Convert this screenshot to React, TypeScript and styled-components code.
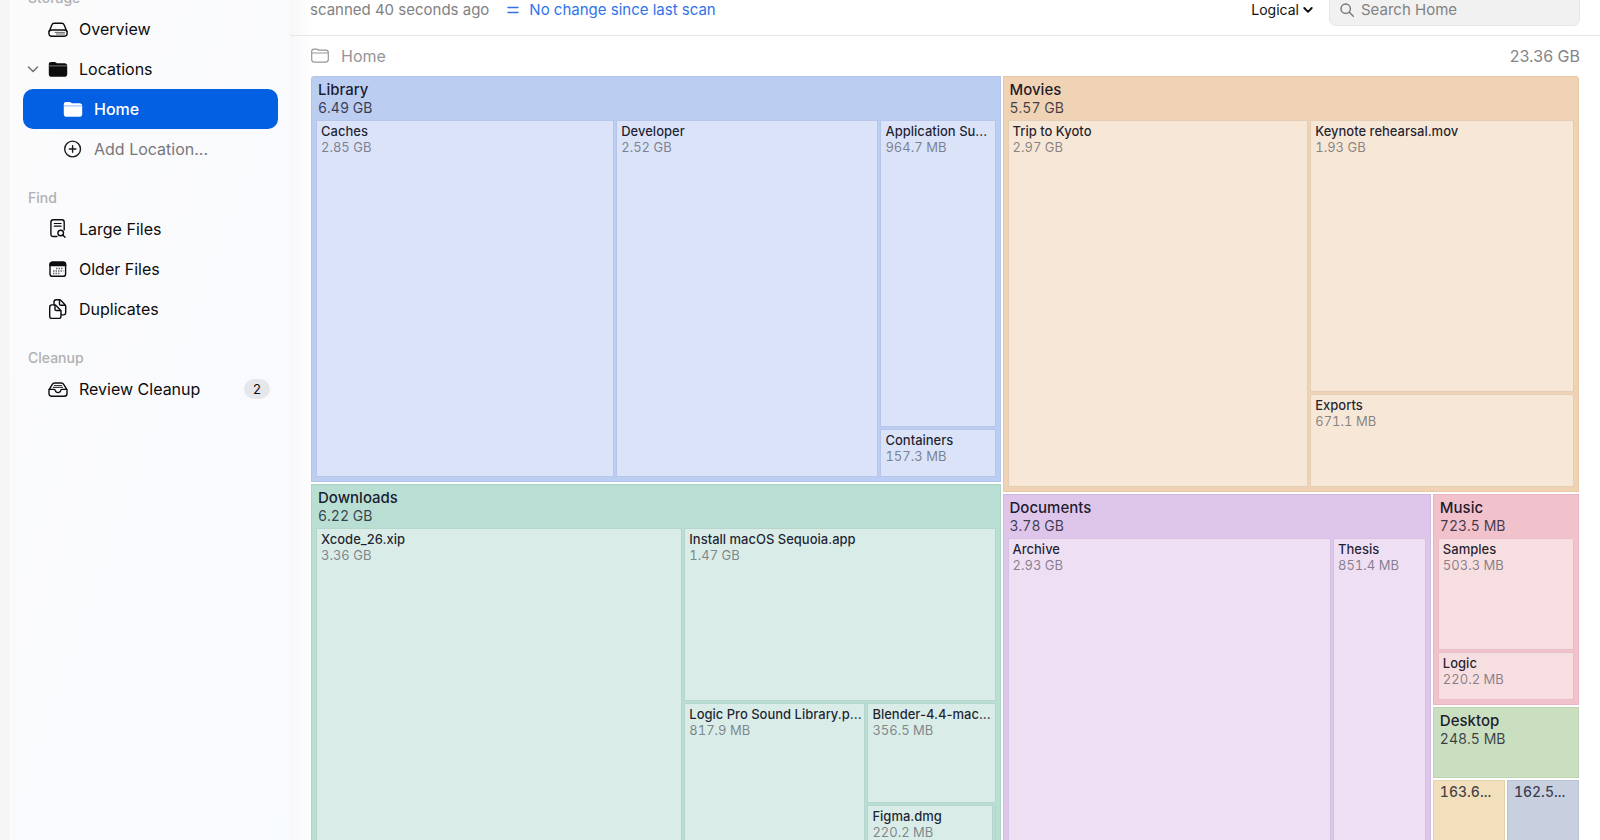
import React from "react";
import styled, { createGlobalStyle } from "styled-components";

const GlobalStyle = createGlobalStyle`
  *, *::before, *::after { box-sizing: border-box; }
  body {
    margin: 0;
    background: #fff;
    color: #111;
    font-family: Inter, "Liberation Sans", sans-serif;
    font-size: 16px;
    line-height: 20px;
  }
  button, input, select { font: inherit; color: inherit; }
`;

/* ---------- frame ---------- */

const Window = styled.div`
  display: flex;
  height: 100vh;
  padding-left: 10px;
  overflow: hidden;
  background: #f6f6f7;
`;

const Sidebar = styled.nav`
  flex: 0 0 280px;
  padding: 0 12px;
  background: linear-gradient(110deg, #fbfbfc 0%, #f9fafd 55%, #f8fbfe 100%);
  border-left: 1px solid #fdfdfd;
`;

const Section = styled.section`
  margin-bottom: 18px;

  &:first-child { margin-top: -13px; }
`;

const SectionTitle = styled.h2`
  margin: 0;
  padding-left: 5px;
  font-size: 14px;
  line-height: 22px;
  font-weight: 500;
  color: #b0b0b2;
`;

const Item = styled.a<{ $nested?: boolean; $active?: boolean; $muted?: boolean }>`
  position: relative;
  display: flex;
  align-items: center;
  gap: 11px;
  height: 40px;
  padding: 0 8px 0 ${(p) => (p.$nested ? 40 : 25)}px;
  border-radius: 10px;
  text-decoration: none;
  white-space: nowrap;
  font-weight: ${(p) => (p.$active ? 500 : 400)};
  color: ${(p) => (p.$active ? "#fff" : p.$muted ? "#77777a" : "#0c0c0d")};
  background: ${(p) => (p.$active ? "#0360e2" : "transparent")};

  svg { flex: none; }
`;

const Disclosure = styled.svg`
  position: absolute;
  left: 4px;
  color: #77777a;
`;

const Count = styled.span`
  margin-left: auto;
  width: 26px;
  border-radius: 10px;
  background: #e6e7ea;
  font-size: 13px;
  text-align: center;
`;

const PlusIcon = styled.svg`
  color: #19191a;
`;

const Main = styled.main`
  flex: 1;
  min-width: 0;
  background: linear-gradient(90deg, #f7f7f9 0, #fff 24px);
`;

const Toolbar = styled.header`
  display: flex;
  align-items: flex-start;
  height: 50px;
  margin-top: -14px;
  padding: 10px 20px 0;
  border-bottom: 1px solid #e5e5e6;
  font-size: 15px;
  line-height: 28px;
`;

const ScanAge = styled.span`
  color: #818183;
`;

const Delta = styled.button`
  display: flex;
  align-items: center;
  gap: 10px;
  height: 28px;
  margin-left: 18px;
  padding: 0;
  border: 0;
  background: none;
  color: #2f73ea;
`;

const ModeSelect = styled.label`
  display: flex;
  align-items: center;
  gap: 4px;
  height: 28px;
  margin-left: auto;
  font-size: 14px;

  select {
    appearance: none;
    field-sizing: content;
    padding: 0;
    border: 0;
    background: none;
  }
`;

const Search = styled.label`
  display: flex;
  align-items: center;
  gap: 7px;
  width: 251px;
  height: 30px;
  margin-left: 16px;
  padding: 0 10px 2px;
  border: 1px solid #e6e6e6;
  border-radius: 7px;
  background: #f1f1f1;
  color: #757577;

  input {
    flex: 1;
    min-width: 0;
    padding: 0;
    border: 0;
    outline: 0;
    background: none;
  }
  input::placeholder { color: #818183; opacity: 1; }
`;

const PathBar = styled.div`
  display: flex;
  align-items: center;
  gap: 11px;
  height: 40px;
  padding: 0 20px;
  color: #959597;

  span:last-child { margin-left: auto; color: #858587; }
`;

/* ---------- treemap ---------- */

const Treemap = styled.div`
  height: calc(100vh - 43px);
  margin: 0 21px;
  border-radius: 4px 4px 0 0;
  overflow: hidden;
  display: grid;
`;

const Split = styled.div<{ $rows?: number[]; $cols?: number[] }>`
  display: grid;
  gap: 2px;
  min-width: 0;
  min-height: 0;
  grid-template-rows: ${(p) => (p.$rows ?? [1]).map((n) => `minmax(0, ${n}fr)`).join(" ")};
  grid-template-columns: ${(p) => (p.$cols ?? [1]).map((n) => `minmax(0, ${n}fr)`).join(" ")};
`;

type Tone = { fill: string; edge: string; cell: string; line: string };

const tones: Record<string, Tone> = {
  blue: { fill: "#bbcdf0", edge: "#b1c4e9", cell: "#dae3f7", line: "#b6c5e9" },
  orange: { fill: "#f0d3b5", edge: "#e8c7a5", cell: "#f6e7d7", line: "#e5ceb6" },
  green: { fill: "#b9ded4", edge: "#abd4c8", cell: "#d9ece8", line: "#b5d5cd" },
  purple: { fill: "#dec6ea", edge: "#d1b8e0", cell: "#eedff3", line: "#d6c0e3" },
  pink: { fill: "#f1c2cb", edge: "#e7b4bf", cell: "#f6dee1", line: "#e9bfc8" },
  leaf: { fill: "#cadec0", edge: "#bdd4b1", cell: "#cadec0", line: "#bdd4b1" },
  sand: { fill: "#f1e0bb", edge: "#e5d2a9", cell: "#f1e0bb", line: "#e5d2a9" },
  slate: { fill: "#c8cfdf", edge: "#bac3d5", cell: "#c8cfdf", line: "#bac3d5" },
};

const Block = styled.section<{ $tone: Tone }>`
  display: grid;
  grid-template-rows: 44px minmax(0, 1fr);
  min-width: 0;
  min-height: 0;
  padding: 0 5px 5px;
  overflow: hidden;
  white-space: nowrap;
  font-variant-numeric: tabular-nums;
  background: ${(p) => p.$tone.fill};
  box-shadow: inset 0 0 0 1px ${(p) => p.$tone.edge};
`;

const BlockHead = styled.header<{ $compact: boolean }>`
  padding: ${(p) => (p.$compact ? 3 : 5)}px 2px 0;
  font-size: 14px;
  line-height: 18px;
  font-weight: ${(p) => (p.$compact ? 500 : 400)};
  color: rgba(10, 10, 30, 0.75);

  h3 {
    margin: 0;
    font-size: 15px;
    line-height: 18px;
    font-weight: 500;
    color: rgba(5, 5, 20, 0.9);
  }
`;

const CellBox = styled.article<{ $tone: Tone }>`
  min-width: 0;
  min-height: 0;
  padding: 2px 4px;
  overflow: hidden;
  border: 1px solid ${(p) => p.$tone.line};
  background: ${(p) => p.$tone.cell};
  font-size: 13px;
  line-height: 16px;
  color: rgba(30, 30, 50, 0.52);

  h4 {
    margin: 0;
    font-size: 13px;
    line-height: 16px;
    font-weight: 500;
    font-variant-numeric: normal;
    color: rgba(5, 5, 20, 0.88);
  }
`;

const Sliver = styled.div<{ $tone: Tone }>`
  background: ${(p) => p.$tone.line};
`;

function Folder({ tone, name, size, children }: { tone: Tone; name: string; size?: string; children?: React.ReactNode }) {
  return (
    <Block $tone={tone}>
      <BlockHead $compact={!size}>
        {size ? <h3>{name}</h3> : name}
        {size}
      </BlockHead>
      {children}
    </Block>
  );
}

function Cell({ tone, name, size }: { tone: Tone; name: string; size: string }) {
  return (
    <CellBox $tone={tone}>
      <h4>{name}</h4>
      {size}
    </CellBox>
  );
}

/* ---------- icons ---------- */

const stroke = {
  fill: "none",
  stroke: "currentColor",
  strokeWidth: 1.4,
  strokeLinecap: "round" as const,
  strokeLinejoin: "round" as const,
};

const DriveIcon = () => (
  <svg width="20" height="20" viewBox="0 0 20 20" {...stroke}>
    <path d="M1.2 12.400 3.700 6.200C4.200 4.900 5 4.300 6.300 4.300h7.400c1.300 0 2.100.6 2.600 1.900l2.500 6.200" />
    <rect x="0.900" y="11" width="18.200" height="6.200" rx="2.600" />
    <path d="M7 13.400h9.500M8.500 15h8" strokeWidth="0.900" opacity="0.700" />
  </svg>
);

const FolderFill = ({ line }: { line: string }) => (
  <svg width="20" height="20" viewBox="0 0 20 20" fill="currentColor">
    <path d="M.8 5.500C.8 3.700 1.500 3 3.200 3h3.100c.9 0 1.400.2 2 .8l.5.400h7.600c1.900 0 2.800.8 2.800 2.600v8.100c0 1.900-.9 2.800-2.800 2.800H3.600C1.700 17.700.8 16.800.8 14.900z" />
    <path d="M.8 6.900h18.400" stroke={line} strokeWidth="1" />
  </svg>
);

const FolderLine = () => (
  <svg width="20" height="20" viewBox="0 0 20 20" {...stroke} strokeWidth="1.200">
    <path d="M1.700 5.600c0-1.800.7-2.500 2.300-2.500h2.300c.8 0 1.200.2 1.700.6l.6.500H15.800c1.700 0 2.500.8 2.500 2.500v6.900c0 1.700-.8 2.500-2.500 2.500H4.200c-1.700 0-2.500-.8-2.500-2.500zM1.700 7h16.600" />
  </svg>
);

const DocSearchIcon = () => (
  <svg width="20" height="20" viewBox="0 0 20 20" {...stroke}>
    <path d="M9 17.500H5.300C3.700 17.500 2.900 16.700 2.900 15.100V3.200C2.900 1.600 3.700.8 5.300.8h8.500c1.600 0 2.400.8 2.400 2.400v7.700" />
    <path d="M6.300 4.500h6.800M6.300 7.200h6.800" strokeWidth="1.200" />
    <circle cx="12.700" cy="14" r="2.800" />
    <path d="m14.800 16.100 2.200 2.200" />
  </svg>
);

const CalendarIcon = () => (
  <svg width="20" height="20" viewBox="0 0 20 20" {...stroke}>
    <rect x="2" y="3.300" width="15.600" height="14" rx="2.400" />
    <path d="M2 6.600V5.700c0-1.600.8-2.400 2.400-2.400h10.800c1.600 0 2.400.8 2.400 2.400v.9z" fill="currentColor" />
    <path d="M8 9.500h7.500M5 12h10.500M5 14.500h7.500" strokeWidth="1.500" strokeDasharray="1.500 1" strokeLinecap="butt" opacity="0.600" />
  </svg>
);

const CopyIcon = () => (
  <svg width="20" height="20" viewBox="0 0 20 20" {...stroke}>
    <path d="M1.700 8.200c0-1.500.8-2.300 2.200-2.300h2.600c.8 0 1.300.2 1.800.8l4 4.300c.5.500.7 1 .7 1.700v4.500c0 1.500-.8 2.300-2.200 2.300H3.900c-1.400 0-2.200-.8-2.200-2.300z" />
    <path d="M7 6.200v4c0 .9.400 1.300 1.300 1.300h4.500" />
    <path d="M6 5.700V3c0-1.500.8-2.300 2.200-2.300h3c.8 0 1.300.2 1.800.8l4 4.200c.5.500.7 1 .7 1.700v6.200c0 1.500-.8 2.300-2.200 2.300h-2.200" />
    <path d="M11.500 1v4c0 .9.400 1.300 1.300 1.300h4.300" />
  </svg>
);

const TrayIcon = () => (
  <svg width="20" height="20" viewBox="0 0 20 20" {...stroke}>
    <path d="M1 10.900 4 5.800C4.700 4.600 5.500 4 6.800 4h6.400c1.300 0 2.100.6 2.800 1.800l3 5.100v3.500c0 1.900-.9 2.800-2.800 2.800H3.800C1.900 17.200 1 16.300 1 14.400z" />
    <path d="M1.200 10.400h5c.7 0 1 .4 1.100 1 .3 1.400 1.300 2.200 2.700 2.200s2.400-.8 2.700-2.200c.1-.6.4-1 1.100-1h5" />
    <path d="M6.300 6.600h7.400M5.300 8.400h9.400" strokeWidth="0.900" />
  </svg>
);

export default function App() {
  const t = tones;
  return (
    <>
      <GlobalStyle />
      <Window>
        <Sidebar>
          <Section>
            <SectionTitle>Storage</SectionTitle>
            <Item href="#overview"><DriveIcon />Overview</Item>
            <Item href="#locations">
              <Disclosure width="12" height="12" viewBox="0 0 12 12" {...stroke} strokeWidth="1.600">
                <path d="m1.500 4 4.500 4.500L10.500 4" />
              </Disclosure>
              <FolderFill line="#77777a" />Locations
            </Item>
            <Item href="#home" $nested $active><FolderFill line="#8fb8f5" />Home</Item>
            <Item href="#add" $nested $muted>
              <PlusIcon width="20" height="20" viewBox="0 0 20 20" {...stroke}>
                <circle cx="9.600" cy="10" r="7.900" />
                <path d="M6.300 10h6.600M9.600 6.700v6.600" />
              </PlusIcon>
              Add Location...
            </Item>
          </Section>
          <Section>
            <SectionTitle>Find</SectionTitle>
            <Item href="#large"><DocSearchIcon />Large Files</Item>
            <Item href="#older"><CalendarIcon />Older Files</Item>
            <Item href="#duplicates"><CopyIcon />Duplicates</Item>
          </Section>
          <Section>
            <SectionTitle>Cleanup</SectionTitle>
            <Item href="#review"><TrayIcon />Review Cleanup<Count>2</Count></Item>
          </Section>
        </Sidebar>

        <Main>
          <Toolbar>
            <ScanAge>scanned 40 seconds ago</ScanAge>
            <Delta type="button">
              <svg width="12" height="12" viewBox="0 0 12 12" {...stroke}>
                <path d="M1 3.500h10M1 8.500h10" />
              </svg>
              No change since last scan
            </Delta>
            <ModeSelect>
              <select aria-label="Size mode" defaultValue="Logical">
                <option>Logical</option>
              </select>
              <svg width="10" height="10" viewBox="0 0 10 10" {...stroke} strokeWidth="1.900">
                <path d="m1.300 3 3.700 3.800L8.700 3" />
              </svg>
            </ModeSelect>
            <Search>
              <svg width="14" height="14" viewBox="0 0 14 14" {...stroke}>
                <circle cx="5.700" cy="5.700" r="4.700" />
                <path d="m9.300 9.300 4 4" />
              </svg>
              <input type="text" aria-label="Search Home" placeholder="Search Home" />
            </Search>
          </Toolbar>
          <PathBar>
            <FolderLine />
            <span>Home</span>
            <span>23.36 GB</span>
          </PathBar>

          <Treemap>
            <Split $cols={[689, 576]}>
              <Split $rows={[406, 389]}>
                <Folder tone={t.blue} name="Library" size="6.49 GB">
                  <Split $cols={[298, 262, 115]}>
                    <Cell tone={t.blue} name="Caches" size="2.85 GB" />
                    <Cell tone={t.blue} name="Developer" size="2.52 GB" />
                    <Split $rows={[308, 48]}>
                      <Cell tone={t.blue} name="Application Su..." size="964.7 MB" />
                      <Cell tone={t.blue} name="Containers" size="157.3 MB" />
                    </Split>
                  </Split>
                </Folder>
                <Folder tone={t.green} name="Downloads" size="6.22 GB">
                  <Split $cols={[366, 311]}>
                    <Cell tone={t.green} name="Xcode_26.xip" size="3.36 GB" />
                    <Split $rows={[174, 165]}>
                      <Cell tone={t.green} name="Install macOS Sequoia.app" size="1.47 GB" />
                      <Split $cols={[181, 128]}>
                        <Cell tone={t.green} name="Logic Pro Sound Library.p..." size="817.9 MB" />
                        <Split $rows={[100, 63]}>
                          <Cell tone={t.green} name="Blender-4.4-mac..." size="356.5 MB" />
                          <Split $cols={[125, 1]}>
                            <Cell tone={t.green} name="Figma.dmg" size="220.2 MB" />
                            <Sliver $tone={t.green} />
                          </Split>
                        </Split>
                      </Split>
                    </Split>
                  </Split>
                </Folder>
              </Split>

              <Split $rows={[416, 379]}>
                <Folder tone={t.orange} name="Movies" size="5.57 GB">
                  <Split $cols={[301, 264]}>
                    <Cell tone={t.orange} name="Trip to Kyoto" size="2.97 GB" />
                    <Split $rows={[273, 93]}>
                      <Cell tone={t.orange} name="Keynote rehearsal.mov" size="1.93 GB" />
                      <Cell tone={t.orange} name="Exports" size="671.1 MB" />
                    </Split>
                  </Split>
                </Folder>
                <Split $cols={[428, 146]}>
                  <Folder tone={t.purple} name="Documents" size="3.78 GB">
                    <Split $cols={[324, 93]}>
                      <Cell tone={t.purple} name="Archive" size="2.93 GB" />
                      <Cell tone={t.purple} name="Thesis" size="851.4 MB" />
                    </Split>
                  </Folder>
                  <Split $rows={[211, 71, 93]}>
                    <Folder tone={t.pink} name="Music" size="723.5 MB">
                      <Split $rows={[113, 48]}>
                        <Cell tone={t.pink} name="Samples" size="503.3 MB" />
                        <Cell tone={t.pink} name="Logic" size="220.2 MB" />
                      </Split>
                    </Folder>
                    <Folder tone={t.leaf} name="Desktop" size="248.5 MB" />
                    <Split $cols={[1, 1]}>
                      <Folder tone={t.sand} name="163.6..." />
                      <Folder tone={t.slate} name="162.5..." />
                    </Split>
                  </Split>
                </Split>
              </Split>
            </Split>
          </Treemap>
        </Main>
      </Window>
    </>
  );
}
